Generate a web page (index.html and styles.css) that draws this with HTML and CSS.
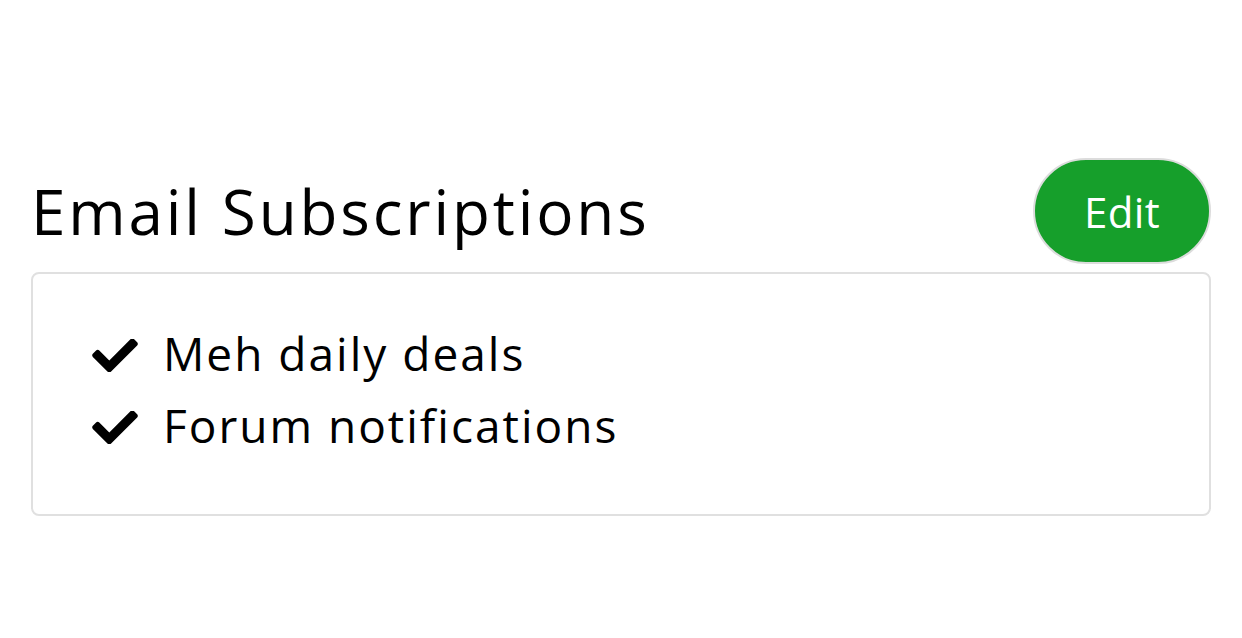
FILE: index.html
```html
<!DOCTYPE html>
<html>
<head>
<meta charset="utf-8">
<link rel="stylesheet" href="styles.css">
</head>
<body>
<div class="page">
  <div class="header">
    <h1 class="title">Email Subscriptions</h1>
    <button class="edit">Edit</button>
  </div>
  <div class="box">
    <ul class="list">
      <li class="item"><svg class="check" viewBox="0 72 512 370"><path d="M173.898 439.404l-166.4-166.4c-9.997-9.997-9.997-26.206 0-36.204l36.203-36.204c9.997-9.998 26.207-9.998 36.204 0L192 312.69 432.095 72.596c9.997-9.997 26.207-9.997 36.204 0l36.203 36.204c9.997 9.997 9.997 26.206 0 36.204l-294.4 294.401c-9.998 9.997-26.207 9.997-36.204-.001z"/></svg><span>Meh daily deals</span></li>
      <li class="item"><svg class="check" viewBox="0 72 512 370"><path d="M173.898 439.404l-166.4-166.4c-9.997-9.997-9.997-26.206 0-36.204l36.203-36.204c9.997-9.998 26.207-9.998 36.204 0L192 312.69 432.095 72.596c9.997-9.997 26.207-9.997 36.204 0l36.203 36.204c9.997 9.997 9.997 26.206 0 36.204l-294.4 294.401c-9.998 9.997-26.207 9.997-36.204-.001z"/></svg><span>Forum notifications</span></li>
    </ul>
  </div>
</div>
</body>
</html>
```
FILE: styles.css
```css
* { box-sizing: border-box; }
body { margin: 0; background: #fff; font-family: "Open Sans", Lato, sans-serif; color: #000; }
.page { padding: 158px 31px 0 31px; }
.header { display: flex; align-items: center; justify-content: space-between; height: 106px; }
.title { margin: 0; font-weight: 400; font-size: 62px; letter-spacing: 2.85px; line-height: 1.2; }
.edit { width: 178px; height: 106px; border-radius: 53px; border: 2px solid #dcdcdc; background: #169f2b; color: #fff; font-family: inherit; font-size: 42px; letter-spacing: 0.3px; padding: 0; }
.box { margin-top: 8px; height: 244px; border: 2px solid #e0e0e0; border-radius: 8px; padding: 43px 0 0 59px; }
.list { list-style: none; margin: 0; padding: 0; }
.item { display: flex; align-items: center; height: 72px; font-size: 46px; letter-spacing: 2px; }
.check { width: 46px; height: 33px; margin-right: 25px; fill: #000; position: relative; top: 2px; }
```
